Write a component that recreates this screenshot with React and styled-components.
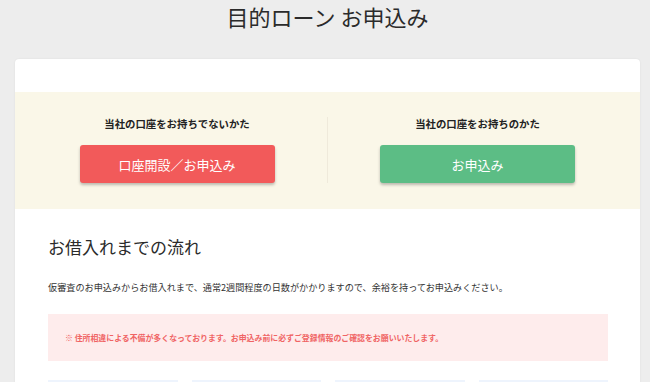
import React from "react";
import styled, { createGlobalStyle } from "styled-components";

const GlobalStyle = createGlobalStyle`
  html, body {
    margin: 0;
    padding: 0;
    background-color: #ededed;
    font-family: "Noto Sans CJK JP", "Noto Sans", sans-serif;
    color: #333;
  }
`;

const Page = styled.div`
  display: flex;
  flex-direction: column;
  padding: 0 10px 0 15px;
`;

const Title = styled.h1`
  margin: 0;
  font-size: 22px;
  font-weight: 400;
  line-height: 32px;
  text-align: center;
  color: #2b2b2b;
`;

const Card = styled.div`
  margin-top: 27px;
  background-color: #fff;
  border-radius: 4px;
  box-shadow: 0 0 2px rgba(0, 0, 0, 0.08);
  overflow: hidden;
`;

const CardTop = styled.div`
  height: 33px;
`;

const ChoiceBand = styled.div`
  display: grid;
  grid-template-columns: 300px 300px;
  padding: 25px 12px 26px 12px;
  background-color: #faf7e8;
`;

const Choice = styled.div`
  display: flex;
  flex-direction: column;
  align-items: center;
  gap: 14px;
  border-left: ${(p) => (p.divided ? "1px solid #efeadb" : "none")};
`;

const ChoiceLabel = styled.div`
  font-size: 10.4px;
  font-weight: 700;
  line-height: 14px;
  color: #222;
`;

const ActionButton = styled.button`
  width: 195px;
  height: 38px;
  border: none;
  border-radius: 3px;
  background-color: ${(p) => p.color};
  color: #fff;
  font-family: inherit;
  font-size: 13px;
  font-weight: 400;
  box-shadow: 0 2px 3px rgba(0, 0, 0, 0.25);
  cursor: pointer;
`;

const FlowSection = styled.div`
  display: flex;
  flex-direction: column;
  padding: 25px 32px 0 33px;
`;

const Heading = styled.h2`
  margin: 0;
  font-size: 17px;
  font-weight: 400;
  line-height: 26px;
  color: #2b2b2b;
`;

const Lead = styled.p`
  margin: 20px 0 0;
  font-size: 9.15px;
  line-height: 14px;
  color: #333;
`;

const Notice = styled.div`
  display: flex;
  align-items: center;
  height: 47px;
  margin-top: 20px;
  padding: 0 17px;
  background-color: #feecec;
  color: #f06464;
  font-size: 7.9px;
  font-weight: 700;
`;

const StepGrid = styled.div`
  display: grid;
  grid-template-columns: repeat(4, 1fr);
  gap: 14px;
  margin-top: 19px;
`;

const Step = styled.div`
  height: 60px;
  background-color: #eef4fd;
`;

function App() {
  return (
    <Page>
      <GlobalStyle />
      <Title>目的ローン お申込み</Title>
      <Card>
        <CardTop />
        <ChoiceBand>
          <Choice>
            <ChoiceLabel>当社の口座をお持ちでないかた</ChoiceLabel>
            <ActionButton color="#f25a5a">口座開設／お申込み</ActionButton>
          </Choice>
          <Choice divided>
            <ChoiceLabel>当社の口座をお持ちのかた</ChoiceLabel>
            <ActionButton color="#5cbd85">お申込み</ActionButton>
          </Choice>
        </ChoiceBand>
        <FlowSection>
          <Heading>お借入れまでの流れ</Heading>
          <Lead>
            仮審査のお申込みからお借入れまで、通常2週間程度の日数がかかりますので、余裕を持ってお申込みください。
          </Lead>
          <Notice>
            ※ 住所相違による不備が多くなっております。お申込み前に必ずご登録情報のご確認をお願いいたします。
          </Notice>
          <StepGrid>
            {[0, 1, 2, 3].map((i) => (
              <Step key={i} />
            ))}
          </StepGrid>
        </FlowSection>
      </Card>
    </Page>
  );
}

export default App;
